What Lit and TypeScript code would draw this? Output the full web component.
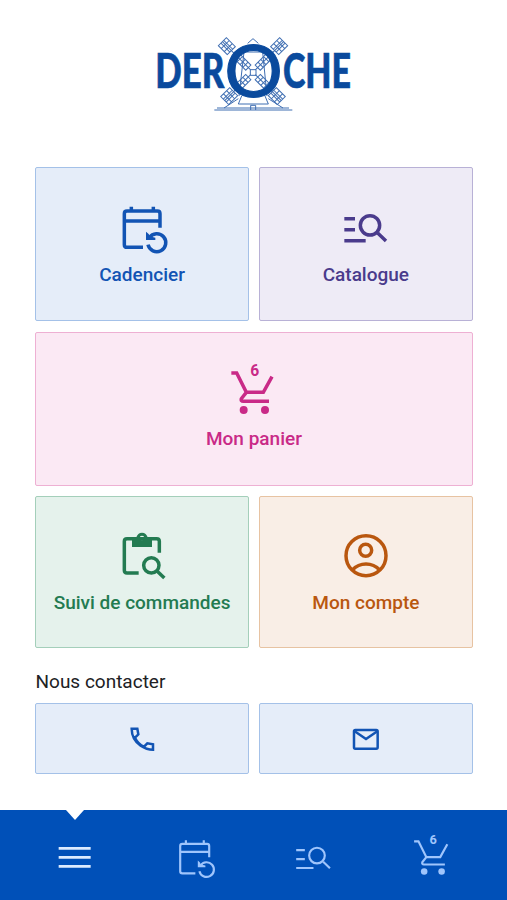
import { LitElement, html, svg, css } from "lit";
import { customElement } from "lit/decorators.js";
import { classMap } from "lit/directives/class-map.js";

const calendar = svg`
  <path d="M390 203V161Q390 153 382 153H291Q283 153 283 161V254Q283 262 291 262H339M283 183H390M304 153V140M370 153V140"/>
  <path d="M358 233A27 27 0 1 1 354 254"/>
  <path class="fill" d="M348 215L356 222L359 229L376 233V240H348Z"/>`;

const catalogue = svg`
  <path d="M268 176H300M268 209H300M268 242H332M368 219L393 243"/>
  <circle cx="345" cy="196" r="29"/>`;

const cart = svg`
  <path d="M124 142H140L169 200H220L246 153M169 200L154 219Q152 227 160 227H237"/>
  <circle class="fill" cx="161" cy="253" r="12"/>
  <circle class="fill" cx="225" cy="253" r="12"/>
  <text x="194" y="152" text-anchor="middle">6</text>`;

const clipboard = svg`
  <path d="M326 248H291Q283 248 283 240V153Q283 145 291 145H380Q388 145 388 153V187"/>
  <path class="fill" fill-rule="evenodd" d="M306 141H319Q323 127 336 127Q349 127 353 141H366V170H306ZM336 136A7 7 0 1 0 336 150A7 7 0 1 0 336 136Z"/>
  <circle cx="364" cy="225" r="23"/><path d="M381 242L403 263"/>`;

const account = svg`
  <circle cx="333" cy="196" r="60"/><circle cx="332" cy="180" r="18"/>
  <path d="M292 239Q309 221 333 221Q357 221 374 239"/>`;

@customElement("app-root")
export class AppRoot extends LitElement {
  static styles = css`
    :host { display: flex; flex-direction: column; box-sizing: border-box; height: 900px; background: #fff; font-family: Roboto, "Liberation Sans", sans-serif; }
    .head { height: 167px; display: flex; justify-content: center; padding-top: 30px; box-sizing: border-box; flex: none; }
    .logo { width: 210px; height: 90px; fill: #0a4a9d; overflow: visible; }
    .logo text { font-family: Lato, sans-serif; font-weight: 900; font-size: 144px; stroke: #0a4a9d; stroke-width: 2; }
    .logo .o { font-weight: 400; font-size: 216px; stroke-width: 3; }
    .mill { fill: none; stroke: #3f6eb2; stroke-width: 3; }
    .grid { display: grid; grid-template-columns: 1fr 1fr; grid-template-rows: 154.4px 154px 152.7px; gap: 10.2px 10.5px; padding: 0 34.5px 0 35.4px; }
    .tile { box-sizing: border-box; border: 1px solid; border-radius: 2px; display: flex; flex-direction: column; align-items: center; padding-top: 36px; font-weight: 500; font-size: 19px; line-height: 22px; gap: 5.5px; }
    .wide { grid-column: span 2; }
    .blue { color: #1254b4; background: #e5edf9; border-color: #a4c1e8; }
    .purple { color: #4a3b8c; background: #eeebf6; border-color: #b8b1d6; }
    .pink { color: #c92a87; background: #fbe9f4; border-color: #eeb0d3; }
    .green { color: #237b51; background: #e5f2ec; border-color: #a4cfba; }
    .orange { color: #b9570f; background: #f9eee6; border-color: #e7c3a2; }
    .icon { width: 54px; height: 54px; overflow: visible; fill: none; stroke: currentColor; stroke-width: 10.5; flex: none; }
    .icon .fill { fill: currentColor; stroke: none; }
    .icon text { fill: currentColor; stroke: none; font: 700 47px Roboto, sans-serif; }
    .title { margin: 22.4px 35.5px 0; height: 32.6px; font-size: 19px; line-height: 22px; color: #202124; }
    .contacts { display: grid; grid-template-columns: 1fr 1fr; gap: 10.5px; padding: 0 34.5px 0 35.4px; height: 71px; }
    .contact { border-width: 1px; border-style: solid; border-radius: 2px; display: flex; align-items: center; justify-content: center; }
    .icon.small { width: 28px; height: 28px; stroke-width: 7.5; }
    .nav { margin-top: auto; height: 90px; background: #0050b8; display: flex; padding: 0 15px; box-sizing: border-box; }
    .item { flex: 1; display: flex; align-items: center; justify-content: center; color: #9fc5fc; position: relative; }
    .item .icon { stroke-width: 8; }
    .item.active { color: #dcebff; }
    .item.active::before { content: ""; position: absolute; top: 0; left: 50%; margin-left: -9px; border: 9px solid transparent; border-top: 10px solid #fff; border-bottom: 0; }
  `;

  private icon(box: string, body: unknown, small = false) {
    return html`<svg class=${classMap({ icon: true, small })} viewBox=${box}>${body}</svg>`;
  }

  private tile(tone: string, label: string, box: string, body: unknown) {
    return html`<div class="tile ${tone}">${this.icon(box, body)}<span>${label}</span></div>`;
  }

  private sail(angle: number, length: number) {
    return svg`<g transform="translate(312 127) rotate(${angle})">
      <path d="M10 0H${length}M20 -11H68V11H20ZM32 -11V11M44 -11V11M56 -11V11"/>
      <path d="M${length - 38} -17H${length}V17H${length - 38}ZM${length - 25} -17V17M${length - 12} -17V17M${length - 38} -6H${length}M${length - 38} 6H${length}"/>
    </g>`;
  }

  render() {
    return html`
      <header class="head">
        <svg class="logo" viewBox="0 0 630 270">
          <g class="mill">
            ${this.sail(-45, 130)}${this.sail(-135, 130)}${this.sail(45, 120)}${this.sail(135, 120)}
            <path d="M296 40L312 26L328 40M285 66H341L354 198M285 66L270 198M304 119H321V136H304ZM278 198L268 222M348 198L358 222M268 222H358M268 206L225 234M358 206L402 234M196 240H430M204 234H420M305 240V226H320V240"/>
          </g>
          <text x="19" y="174" textLength="207" lengthAdjust="spacingAndGlyphs">DER</text>
          <text class="o" x="226" y="200" textLength="176" lengthAdjust="spacingAndGlyphs">O</text>
          <text x="402" y="174" textLength="204" lengthAdjust="spacingAndGlyphs">CHE</text>
        </svg>
      </header>
      <main class="grid">
        ${this.tile("blue", "Cadencier", "255 132 162 162", calendar)}
        ${this.tile("purple", "Catalogue", "252 132 162 162", catalogue)}
        ${this.tile("pink wide", "Mon panier", "111 130 162 162", cart)}
        ${this.tile("green", "Suivi de commandes", "255 128 162 162", clipboard)}
        ${this.tile("orange", "Mon compte", "252 128 162 162", account)}
      </main>
      <div class="title">Nous contacter</div>
      <section class="contacts">
        <div class="contact blue">${this.icon("294 179 84 84", svg`<path d="M305 190H322L325 207L315 217Q324 236 342 244L352 234L369 237V253Q350 253 332 241Q305 222 305 190Z"/>`, true)}</div>
        <div class="contact blue">${this.icon("291 179 84 84", svg`<rect x="297" y="194" width="71" height="56" rx="4"/><path d="M299 198L333 221L367 198"/>`, true)}</div>
      </section>
      <nav class="nav">
        <div class="item active">${this.icon("144 84 162 162", svg`<path d="M176 145H272M176 172H272M176 199H272"/>`)}</div>
        <div class="item">${this.icon("501 84 162 162", svg`<g transform="translate(310.5 7) scale(.813)">${calendar}</g>`)}</div>
        <div class="item">${this.icon("98 84 162 162", svg`<g transform="translate(-88.5 8) scale(.81)">${catalogue}</g>`)}</div>
        <div class="item">${this.icon("455 84 162 162", svg`<g transform="translate(381 8) scale(.817)">${cart}</g>`)}</div>
      </nav>`;
  }
}
